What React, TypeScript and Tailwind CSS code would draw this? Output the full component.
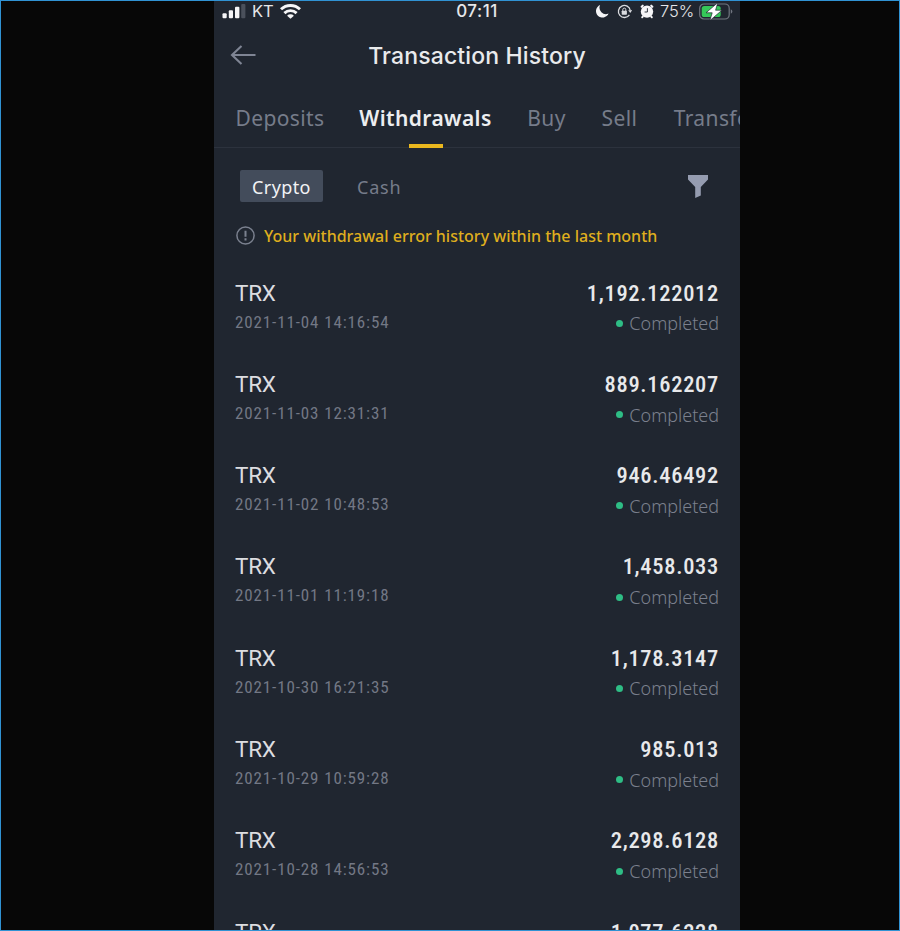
import React from "react";

interface Transaction {
  symbol: string;
  date: string;
  amount: string;
  status: string;
}

const transactions: Transaction[] = [
  { symbol: "TRX", date: "2021-11-04 14:16:54", amount: "1,192.122012", status: "Completed" },
  { symbol: "TRX", date: "2021-11-03 12:31:31", amount: "889.162207", status: "Completed" },
  { symbol: "TRX", date: "2021-11-02 10:48:53", amount: "946.46492", status: "Completed" },
  { symbol: "TRX", date: "2021-11-01 11:19:18", amount: "1,458.033", status: "Completed" },
  { symbol: "TRX", date: "2021-10-30 16:21:35", amount: "1,178.3147", status: "Completed" },
  { symbol: "TRX", date: "2021-10-29 10:59:28", amount: "985.013", status: "Completed" },
  { symbol: "TRX", date: "2021-10-28 14:56:53", amount: "2,298.6128", status: "Completed" },
  { symbol: "TRX", date: "2021-10-27 13:22:40", amount: "1,077.6228", status: "Completed" },
];

const tabs = [
  { label: "Deposits", width: "w-[88px]" },
  { label: "Withdrawals", width: "w-[133px]", active: true },
  { label: "Buy", width: "w-[39px]" },
  { label: "Sell", width: "w-[37px]" },
  { label: "Transfer", width: "w-[86px]" },
];

const StatusBar: React.FC = () => (
  <div className="grid h-5 shrink-0 grid-cols-3 items-center font-['Inter',sans-serif] text-[#e6e7ea]">
    <div className="flex items-center pl-2">
      {/* Signal */}
      <svg className="h-[15px] w-6" viewBox="0 0 24 15" fill="#f5f5f7">
        <rect x="0.5" y="9.2" width="4.2" height="5" rx="1" />
        <rect x="6.8" y="6.2" width="4.2" height="8" rx="1" />
        <rect x="13" y="2.7" width="4.4" height="11.5" rx="1" />
        <rect x="19.2" y="0" width="4.2" height="14.2" rx="1" fill="#4a505b" />
      </svg>
      <span className="ml-[6px] w-[21px] text-[16.5px] leading-5 whitespace-nowrap">KT</span>
      {/* Wifi */}
      <svg className="ml-[7px] h-[15px] w-[21px]" viewBox="0 0 21 15" fill="none" stroke="#f5f5f7" strokeWidth="2.9">
        <path d="M1 5.3a13.7 13.7 0 0 1 19 0" />
        <path d="M4.4 9.1a8.7 8.7 0 0 1 12.2 0" />
        <path d="M10.5 14.8 7.1 11.7a4.8 4.8 0 0 1 6.8 0z" fill="#f5f5f7" stroke="none" />
      </svg>
    </div>
    <div className="text-center text-[17px] leading-5 font-medium tracking-[0.5px]">07:11</div>
    <div className="flex items-center justify-end pr-[7px]">
      {/* Do not disturb */}
      <svg className="h-[14px] w-[13px]" viewBox="0 0 14 14" fill="#f5f5f7">
        <path d="M4.4 0.6A7 7 0 1 0 13.5 9.7 6.9 6.9 0 0 1 4.4 0.6z" />
      </svg>
      {/* Rotation lock */}
      <svg className="ml-2 h-[15px] w-[15px]" viewBox="0 0 15 15" fill="none" stroke="#d9dbdf" strokeWidth="1.3">
        <path d="M12.4 10.8A6 6 0 1 1 13.3 6.5" />
        <path d="M11.2 6.2h4L13.2 9z" fill="#d9dbdf" stroke="none" />
        <rect x="4.7" y="6.7" width="5.2" height="4" rx="0.6" fill="#d9dbdf" stroke="none" />
        <path d="M5.8 7V5.6a1.5 1.5 0 0 1 3 0V7" strokeWidth="1" />
      </svg>
      {/* Alarm */}
      <svg className="ml-2 h-[15px] w-[14px]" viewBox="0 0 14 15">
        <circle cx="7" cy="7.6" r="6.2" fill="#f5f5f7" />
        <path d="M1.6 2.8 2.8 1.6M12.4 2.8 11.2 1.6M2.8 12.6 2.2 13.2M11.2 12.6l.6.6" stroke="#f5f5f7" strokeWidth="2" strokeLinecap="round" />
        <path d="M7.4 4.2v3.8H4.6" fill="none" stroke="#202630" strokeWidth="0.9" />
      </svg>
      <span className="ml-[6px] w-[35px] text-[16.5px] leading-5 font-light whitespace-nowrap">75%</span>
      {/* Battery */}
      <svg className="ml-[4px] h-[17px] w-[34px]" viewBox="0 0 34 17">
        <rect x="0.7" y="1" width="29.5" height="15" rx="4.3" fill="none" stroke="#717680" strokeWidth="1.2" />
        <path d="M31.8 6.2v4.6q1.6-.8 1.6-2.3t-1.6-2.3z" fill="#717680" />
        <rect x="2.7" y="2.9" width="19" height="11.2" rx="2.6" fill="#35c759" />
        <path d="M18.8 -0.4 7 9.8h6.2L10.8 17.6 23 7.2h-6.4z" fill="#fff" stroke="#202630" strokeWidth="0.7" />
      </svg>
    </div>
  </div>
);

const TransactionRow: React.FC<Transaction> = ({ symbol, date, amount, status }) => (
  <div className="flex h-[91.3px] shrink-0 justify-between pr-[21px] pl-[21px] whitespace-nowrap font-['Roboto',sans-serif]">
    <div>
      <div className="text-[22.5px] leading-7 tracking-[-0.3px] text-[#dcdde0]">{symbol}</div>
      <div className="mt-px text-[17px] leading-7 font-stretch-semi-condensed tracking-[0.88px] text-[#737885]">{date}</div>
    </div>
    <div className="flex flex-col items-end">
      <div className="text-[22.5px] leading-7 font-medium font-stretch-semi-condensed tracking-[0.7px] text-[#e8e9eb]">{amount}</div>
      <div className="mt-[2.8px] flex items-center">
        <span className="mr-[6px] h-[7px] w-[7px] rounded-full bg-[#2ebd85]" />
        <span className="font-['Noto_Sans',sans-serif] text-[18px] leading-7 font-light text-[#7b808d]">{status}</span>
      </div>
    </div>
  </div>
);

const App: React.FC = () => {
  return (
    <div className="flex h-[931px] w-[900px] overflow-hidden border border-[#3092d3] bg-[#070707] pl-[213px]">
      <div className="flex w-[526px] flex-col overflow-hidden bg-[#202630]">
        <StatusBar />

        {/* Header */}
        <div className="grid h-[67px] shrink-0 grid-cols-[60px_1fr_60px] items-center">
          <svg className="ml-4 h-5 w-[26px]" viewBox="0 0 26 20" fill="none" stroke="#7f8594" strokeWidth="2.1">
            <path d="M25.5 10H1.5M11.5 1 2 10l9.5 9" />
          </svg>
          <h1 className="pt-[3px] text-center font-['Inter',sans-serif] text-[23px] font-medium tracking-[0.15px] text-[#e9eaec]">
            Transaction History
          </h1>
        </div>

        {/* Tabs */}
        <div className="flex h-[60px] shrink-0 gap-[35px] border-b border-[#2c323d] pl-[22px] font-['Noto_Sans',sans-serif] text-[21px] leading-[60px] tracking-[0.4px] whitespace-nowrap">
          {tabs.map((tab) => (
            <div key={tab.label} className={`flex shrink-0 flex-col items-center ${tab.width}`}>
              <span
                className={
                  tab.active ? "h-[56px] font-semibold text-[#edeef0]" : "h-[56px] text-[#767c8a]"
                }
              >
                {tab.label}
              </span>
              {tab.active && <span className="h-1 w-[34px] shrink-0 bg-[#eab71e]" />}
            </div>
          ))}
        </div>

        {/* Sub tabs */}
        <div className="mt-[22px] flex h-8 shrink-0 items-center pl-[26px] font-['Noto_Sans',sans-serif] text-[18px] tracking-[0.4px]">
          <div className="flex h-8 w-[83px] items-center justify-center rounded-[2px] bg-[#434c5b] pt-0.5 text-[#f2f3f5]">
            Crypto
          </div>
          <div className="ml-[34px] pt-0.5 tracking-[0.8px] text-[#767c8a]">Cash</div>
          <svg className="mr-8 ml-auto h-6 w-5" viewBox="0 0 20 24" fill="#959cb0">
            <path d="M0 1h20v4.5L12.8 13v8.6L7.2 24V13L0 5.5z" />
          </svg>
        </div>

        {/* Notice */}
        <div className="mt-5 flex h-7 shrink-0 items-center pl-[22px]">
          <svg className="h-5 w-5" viewBox="0 0 20 20" fill="none" stroke="#7b818f" strokeWidth="1.5">
            <circle cx="9.5" cy="9.5" r="8.6" />
            <path d="M9.5 4.8v6M9.5 12.3v2.2" strokeWidth="2" />
          </svg>
          <span className="ml-2 font-['Noto_Sans',sans-serif] text-[16px] font-medium whitespace-nowrap text-[#dfae1e]">
            Your withdrawal error history within the last month
          </span>
        </div>

        {/* Transaction list */}
        <div className="mt-[28.5px] flex flex-col">
          {transactions.map((transaction) => (
            <TransactionRow key={transaction.date} {...transaction} />
          ))}
        </div>
      </div>
    </div>
  );
};

export default App;
